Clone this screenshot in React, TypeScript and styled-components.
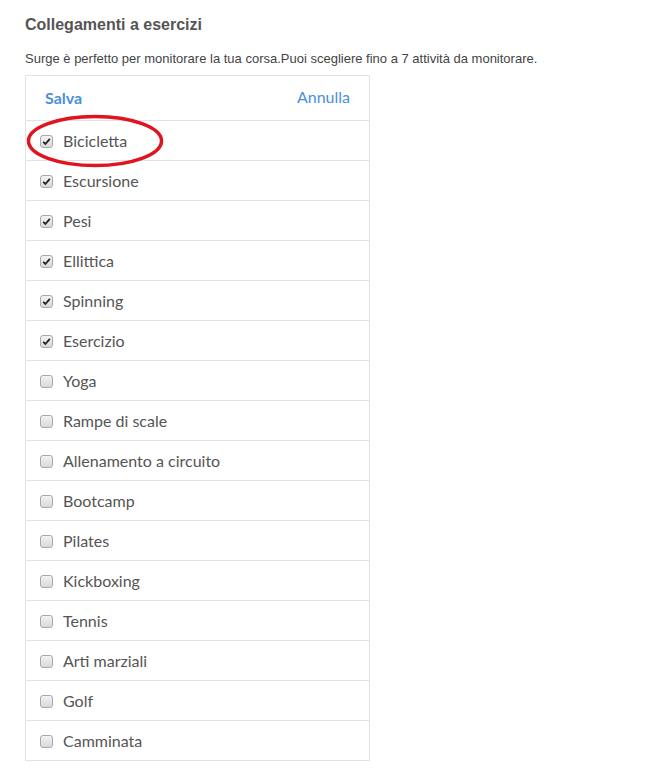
import React from "react";
import styled, { createGlobalStyle } from "styled-components";

const Global = createGlobalStyle`
  html, body { margin: 0; padding: 0; background: #fff; }
  body { font-family: "Liberation Sans", Arial, sans-serif; }
`;

const Page = styled.div`
  padding: 15px 0 0 25px;
  width: 629px;
`;

const Title = styled.h2`
  margin: 0;
  font-family: "Liberation Sans", Arial, sans-serif;
  font-size: 16px;
  font-weight: bold;
  color: #555;
  line-height: 20px;
`;

const Subtitle = styled.p`
  margin: 16px 0 0 0;
  font-family: "Liberation Sans", Arial, sans-serif;
  font-size: 13px;
  color: #444;
  line-height: 16px;
`;

const Panel = styled.div`
  position: relative;
  margin-top: 8px;
  width: 343px;
  border: 1px solid #e3e3e3;
`;

const Header = styled.div`
  display: flex;
  justify-content: space-between;
  align-items: center;
  height: 44px;
  padding: 0 19px 0 19px;
  border-bottom: 1px solid #e3e3e3;
  font-family: Lato, "Open Sans", sans-serif;
`;

const LinkButton = styled.span<{ $bold?: boolean }>`
  color: #4a90d9;
  font-size: 16px;
  font-weight: ${(p) => (p.$bold ? 700 : 400)};
  margin-top: ${(p) => (p.$bold ? "-1px" : "-3px")};
`;

const Row = styled.label<{ $last?: boolean }>`
  display: flex;
  align-items: center;
  gap: 10px;
  height: 39px;
  padding: 0 0 0 14px;
  border-bottom: ${(p) => (p.$last ? "none" : "1px solid #e3e3e3")};
  font-family: Lato, "Open Sans", sans-serif;
  font-size: 16px;
  color: #555;
`;

const Box = styled.span<{ $on: boolean }>`
  position: relative;
  width: 11px;
  height: 11px;
  border: 1px solid #a9a9a9;
  border-radius: 3px;
  background: linear-gradient(#f3f3f3, #d8d8d8);
  margin-top: 2px;
  display: inline-flex;
  align-items: center;
  justify-content: center;
`;

const Ellipse = styled.svg`
  position: absolute;
  left: 0px;
  top: 37px;
  pointer-events: none;
`;

const items: [string, boolean][] = [
  ["Bicicletta", true],
  ["Escursione", true],
  ["Pesi", true],
  ["Ellittica", true],
  ["Spinning", true],
  ["Esercizio", true],
  ["Yoga", false],
  ["Rampe di scale", false],
  ["Allenamento a circuito", false],
  ["Bootcamp", false],
  ["Pilates", false],
  ["Kickboxing", false],
  ["Tennis", false],
  ["Arti marziali", false],
  ["Golf", false],
  ["Camminata", false],
];

export default function App() {
  return (
    <>
      <Global />
      <Page>
        <Title>Collegamenti a esercizi</Title>
        <Subtitle>
          Surge è perfetto per monitorare la tua corsa.Puoi scegliere fino a 7 attività da monitorare.
        </Subtitle>
        <Panel>
          <Header>
            <LinkButton $bold>Salva</LinkButton>
            <LinkButton>Annulla</LinkButton>
          </Header>
          {items.map(([name, on], i) => (
            <Row key={name} $last={i === items.length - 1}>
              <Box $on={on}>
                {on && (
                  <svg width="9" height="9" viewBox="0 0 9 9">
                    <path d="M1.2 4.8 L3.4 7 L7.8 1.8" fill="none" stroke="#222" strokeWidth="1.8" />
                  </svg>
                )}
              </Box>
              {name}
            </Row>
          ))}
          <Ellipse width="140" height="56" viewBox="0 0 140 56">
            <ellipse cx="69" cy="28" rx="66.5" ry="24.5" fill="none" stroke="#e0141e" strokeWidth="3.5" />
          </Ellipse>
        </Panel>
      </Page>
    </>
  );
}
